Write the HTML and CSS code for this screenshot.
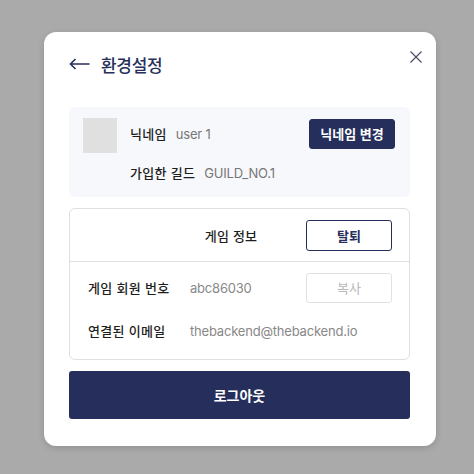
FILE: index.html
```html
<!doctype html>
<html lang="ko">
<head>
    <meta charset="UTF-8">
    <title>환경설정</title>
    <link rel="stylesheet" href="styles.css">
</head>
<body>
<div class="modal">
    <div class="close">
        <svg width="12" height="12" viewBox="0 0 12 12"><path d="M0.5 0.5L11.5 11.5M11.5 0.5L0.5 11.5" stroke="#4a4f66" stroke-width="1.2" fill="none"/></svg>
    </div>
    <div class="head">
        <svg class="back" width="21" height="12" viewBox="0 0 21 12"><path d="M20.5 6H1.5M6.5 1L1.5 6L6.5 11" stroke="#262f5c" stroke-width="1.6" fill="none"/></svg>
        <span class="title">환경설정</span>
    </div>
    <div class="profile">
        <div class="avatar"></div>
        <div class="info">
            <div class="line">
                <span class="key">닉네임</span>
                <span class="val">user 1</span>
                <button class="btn fill">닉네임 변경</button>
            </div>
            <div class="line">
                <span class="key">가입한 길드</span>
                <span class="val">GUILD_NO.1</span>
            </div>
        </div>
    </div>
    <div class="game">
        <div class="game-head">
            <div class="spacer"></div>
            <div class="game-title">게임 정보</div>
            <button class="btn line-btn">탈퇴</button>
        </div>
        <div class="rows">
            <div class="row">
                <span class="label">게임 회원 번호</span>
                <span class="data">abc86030</span>
                <button class="btn ghost">복사</button>
            </div>
            <div class="row">
                <span class="label">연결된 이메일</span>
                <span class="data">thebackend@thebackend.io</span>
            </div>
        </div>
    </div>
    <button class="logout">로그아웃</button>
</div>
</body>
</html>
```

FILE: styles.css
```css
*{
    margin: 0;
    padding: 0;
    box-sizing: border-box;
}
body{
    background: #aaaaaa;
    padding: 32px 0 0 44px;
    height: 474px;
    font-family: "Noto Sans CJK KR", "Noto Sans", sans-serif;
    color: #1e1e1e;
}
.modal{
    position: relative;
    width: 392px;
    height: 414px;
    background: #fff;
    border-radius: 12px;
    padding: 20px 26px 0 25px;
    box-shadow: 0 2px 6px rgba(0,0,0,0.15);
}
.close{
    position: absolute;
    top: 19px;
    right: 14px;
    width: 12px;
    height: 12px;
}
.close svg{
    display: block;
}
.head{
    display: flex;
    align-items: center;
    height: 24px;
    gap: 11px;
}
.back{
    display: block;
}
.title{
    font-size: 17px;
    font-weight: 500;
    color: #262f5c;
    letter-spacing: -0.3px;
}
.profile{
    margin-top: 31px;
    height: 90px;
    background: #f6f8fc;
    border-radius: 6px;
    display: flex;
    padding: 11px 15px 0 14px;
}
.avatar{
    width: 34px;
    height: 35px;
    background: #e0e0e0;
}
.info{
    flex: 1;
    margin-left: 13px;
}
.line{
    display: flex;
    align-items: center;
    height: 31px;
    font-size: 13px;
}
.line + .line{
    margin-top: 8px;
}
.key{
    font-weight: 500;
    margin-right: 9px;
    letter-spacing: 0.3px;
}
.val{
    color: #777;
    flex: 1;
    font-family: Inter, "Noto Sans CJK KR", sans-serif;
    letter-spacing: -0.2px;
}
.btn{
    width: 86px;
    height: 30px;
    border-radius: 3px;
    font-family: inherit;
    font-size: 13px;
    font-weight: 700;
    background: #fff;
    border: 1px solid #262f5c;
    color: #262f5c;
}
.btn.fill{
    background: #262f5c;
    color: #fff;
}
.btn.ghost{
    border-color: #e2e2e2;
    color: #b8b8b8;
    font-weight: 400;
}
.game{
    margin-top: 11px;
    border: 1px solid #dfdfdf;
    border-radius: 6px;
}
.game-head{
    display: flex;
    align-items: center;
    height: 53px;
    padding-right: 17px;
    border-bottom: 1px solid #dfdfdf;
}
.spacer{
    width: 86px;
}
.game-title{
    flex: 1;
    text-align: center;
    font-size: 13px;
    font-weight: 500;
    letter-spacing: 0.2px;
}
.game-head .btn{
    height: 31px;
}
.rows{
    padding: 10px 17px 13px 18px;
}
.row{
    display: flex;
    align-items: center;
    height: 31px;
    font-size: 13px;
}
.row + .row{
    margin-top: 12px;
}
.label{
    width: 102px;
    font-weight: 500;
    letter-spacing: 0.3px;
}
.data{
    flex: 1;
    color: #888;
    font-family: Inter, "Noto Sans CJK KR", sans-serif;
    letter-spacing: -0.2px;
}
.logout{
    display: block;
    width: 100%;
    height: 48px;
    margin-top: 11px;
    background: #262f5c;
    color: #fff;
    border: none;
    border-radius: 3px;
    font-family: inherit;
    font-size: 14px;
    font-weight: 700;
}
```
